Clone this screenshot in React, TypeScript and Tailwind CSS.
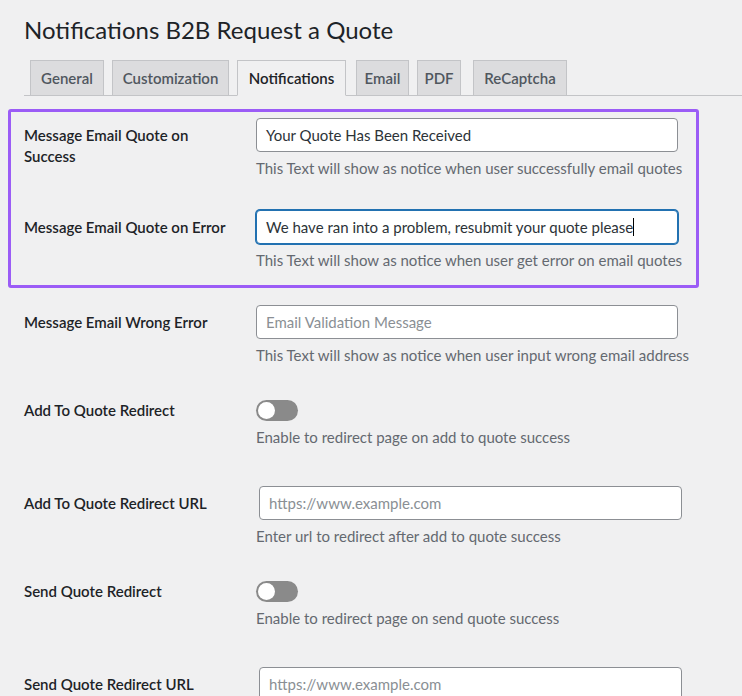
import React from "react";

const Help = ({ children }: { children: React.ReactNode }) => (
  <div className="mt-[6px] text-[15px] leading-[20px] text-[#646970]">{children}</div>
);

const Input = ({ value, placeholder, focused, wide }: { value?: string; placeholder?: string; focused?: boolean; wide?: boolean }) => (
  <div
    className={`${wide ? "ml-[3px] w-[423px]" : "w-[422px]"} h-[34px] rounded-[4px] bg-white px-[9px] flex items-center text-[15px] ${
      focused ? "border border-[#2271b1] shadow-[0_0_0_1px_#2271b1]" : "border border-[#8c8f94]"
    } ${value ? "text-[#2c3338]" : "text-[#8a8f94]"}`}
  >
    {value || placeholder}
    {focused && <span className="w-px h-[18px] bg-black" />}
  </div>
);

const Toggle = () => (
  <div className="w-[42px] h-[21px] rounded-full bg-[#8a8a8a] flex items-center px-[2px]">
    <div className="w-[17px] h-[17px] rounded-full bg-white" />
  </div>
);

const Row = ({ label, children, h, inside }: { label: React.ReactNode; children: React.ReactNode; h: string; inside?: boolean }) => (
  <div className={`flex ${h}`}>
    <div className={`${inside ? "w-[245px] pl-[13px]" : "w-[256px] pl-[24px]"} text-[15px] font-semibold text-[#1d2327] leading-[21px] pt-[7px]`}>{label}</div>
    <div>{children}</div>
  </div>
);

const ToggleRow = ({ label, help }: { label: string; help: string }) => (
  <div className="flex h-[86px]">
    <div className="w-[256px] pl-[24px] text-[15px] font-semibold text-[#1d2327] leading-[21px]">{label}</div>
    <div><Toggle /><div className="mt-[6px] text-[15px] leading-[20px] text-[#646970]">{help}</div></div>
  </div>
);

export default function App() {
  const tabs = ["General", "Customization", "Notifications", "Email", "PDF", "ReCaptcha"];
  const widths = ["w-[74px]", "w-[117px]", "w-[109px]", "w-[53px]", "w-[44px]", "w-[94px]"];
  return (
    <div className="w-[742px] h-[696px] overflow-hidden bg-[#f0f0f1]" style={{ fontFamily: "Lato, 'Noto Sans', sans-serif" }}>
      <div className="pl-[24px] pt-[14px] text-[24px] leading-[32px] text-[#1d2327]">Notifications B2B Request a Quote</div>
      <div className="mt-[14px] ml-[24px] flex items-end gap-[8px] border-b border-[#c3c4c7] pl-[6px]">
        {tabs.map((t, i) => (
          <div
            key={t}
            className={`${widths[i]} h-[36px] flex items-center justify-center text-[15px] font-semibold border border-[#c3c4c7] -mb-px ${
              i === 2 ? "bg-[#f0f0f1] border-b-[#f0f0f1] text-[#1d2327]" : "bg-[#dcdcde] text-[#50575e]"
            } ${i === 3 ? "ml-[2px]" : ""} ${i === 5 ? "ml-[4px]" : ""}`}
          >
            {t}
          </div>
        ))}
      </div>
      <div className="mt-[13px] ml-[8px] w-[691px] border-[3px] border-[#9b5cf6] rounded-[3px] pt-[6px] pb-[13px]">
        <Row inside label={<>Message Email Quote on<br />Success</>} h="h-[92px]">
          <Input value="Your Quote Has Been Received" />
          <Help>This Text will show as notice when user successfully email quotes</Help>
        </Row>
        <Row inside label="Message Email Quote on Error" h="h-[62px]">
          <Input value="We have ran into a problem, resubmit your quote please" focused />
          <Help>This Text will show as notice when user get error on email quotes</Help>
        </Row>
      </div>
      <div className="mt-[17px] flex flex-col">
        <Row label="Message Email Wrong Error" h="h-[95px]">
          <Input placeholder="Email Validation Message" />
          <Help>This Text will show as notice when user input wrong email address</Help>
        </Row>
        <ToggleRow label="Add To Quote Redirect" help="Enable to redirect page on add to quote success" />
        <Row label="Add To Quote Redirect URL" h="h-[95px]">
          <Input placeholder="https://www.example.com" wide />
          <Help>Enter url to redirect after add to quote success</Help>
        </Row>
        <ToggleRow label="Send Quote Redirect" help="Enable to redirect page on send quote success" />
        <Row label="Send Quote Redirect URL" h="h-[95px]">
          <Input placeholder="https://www.example.com" wide />
        </Row>
      </div>
    </div>
  );
}
